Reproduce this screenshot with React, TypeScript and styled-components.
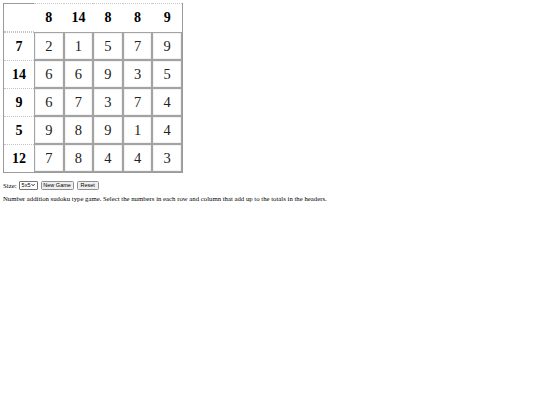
import React from "react";
import styled, { createGlobalStyle } from "styled-components";

const serif = `"Liberation Serif", "Times New Roman", Times, serif`;
const sans = `"Liberation Sans", Arial, sans-serif`;

const Global = createGlobalStyle`
  html, body { margin: 0; padding: 0; background: #fff; }
  body { padding: 3px; font-family: ${serif}; color: #000; }
`;

const Board = styled.div`
  display: grid;
  grid-template-columns: 30px repeat(5, 29.6px);
  grid-template-rows: 29px repeat(5, 28px);
  width: 178px;
  border-left: 1px solid #9a9a9a;
  border-right: 1px solid #9a9a9a;
  border-bottom: 1px solid #9a9a9a;
  font-family: ${serif};
`;

const Corner = styled.div`
  border-top: 1px solid #9a9a9a;
  border-bottom: 1px dotted #c4c4c4;
`;

const ColHead = styled.div`
  border-top: 1px dotted #c8c8c8;
  display: flex;
  align-items: center;
  justify-content: center;
  font-family: ${serif};
  font-weight: bold;
  font-size: 14px;
`;

const RowHead = styled.div`
  border-top: 1px dotted #c4c4c4;
  display: flex;
  align-items: center;
  justify-content: center;
  font-family: ${serif};
  font-weight: bold;
  font-size: 14px;
`;

const Cell = styled.div`
  border: 1px solid #a3a3a3;
  box-shadow: inset 0 0 0 0.5px #e6e6e6;
  display: flex;
  align-items: center;
  justify-content: center;
  font-family: ${serif};
  font-size: 14.5px;
  color: #222;
  box-sizing: border-box;
`;

const Controls = styled.div`
  display: flex;
  align-items: center;
  gap: 3px;
  margin-top: 7px;
  height: 10px;
  font-family: ${serif};
  font-size: 6.8px;
`;

const Label = styled.span`
  margin-right: -1px;
`;

const Select = styled.div`
  display: flex;
  align-items: center;
  gap: 1px;
  height: 9px;
  width: 19px;
  box-sizing: border-box;
  padding: 0 1px 0 2px;
  border: 1px solid #767676;
  border-radius: 1px;
  font-family: ${sans};
  font-size: 5.5px;
  background: #fff;
`;

const Button = styled.div<{ $w: number }>`
  display: flex;
  align-items: center;
  justify-content: center;
  height: 9px;
  width: ${(p) => p.$w}px;
  box-sizing: border-box;
  border: 1px solid #8f8f8f;
  border-radius: 1.5px;
  background: #efefef;
  font-family: ${sans};
  font-size: 5.5px;
`;

const Info = styled.p`
  margin: 5px 0 0 0;
  font-family: ${serif};
  font-size: 6.75px;
  white-space: nowrap;
`;

const colTotals = [8, 14, 8, 8, 9];
const rows = [
  { total: 7, vals: [2, 1, 5, 7, 9] },
  { total: 14, vals: [6, 6, 9, 3, 5] },
  { total: 9, vals: [6, 7, 3, 7, 4] },
  { total: 5, vals: [9, 8, 9, 1, 4] },
  { total: 12, vals: [7, 8, 4, 4, 3] },
];

export default function App() {
  return (
    <>
      <Global />
      <Board>
        <Corner />
        {colTotals.map((t, i) => (
          <ColHead key={i}>{t}</ColHead>
        ))}
        {rows.map((r, ri) => (
          <React.Fragment key={ri}>
            <RowHead>{r.total}</RowHead>
            {r.vals.map((v, ci) => (
              <Cell key={ci}>{v}</Cell>
            ))}
          </React.Fragment>
        ))}
      </Board>
      <Controls>
        <Label>Size:</Label>
        <Select>
          <span>5x5</span>
          <svg width="5" height="4" viewBox="0 0 10 8">
            <path d="M1 1.5 L5 6 L9 1.5" fill="none" stroke="#000" strokeWidth="1.8" />
          </svg>
        </Select>
        <Button $w={33}>New Game</Button>
        <Button $w={22}>Reset</Button>
      </Controls>
      <Info>
        Number addition sudoku type game. Select the numbers in each row and column that add up to the totals in the headers.
      </Info>
    </>
  );
}
